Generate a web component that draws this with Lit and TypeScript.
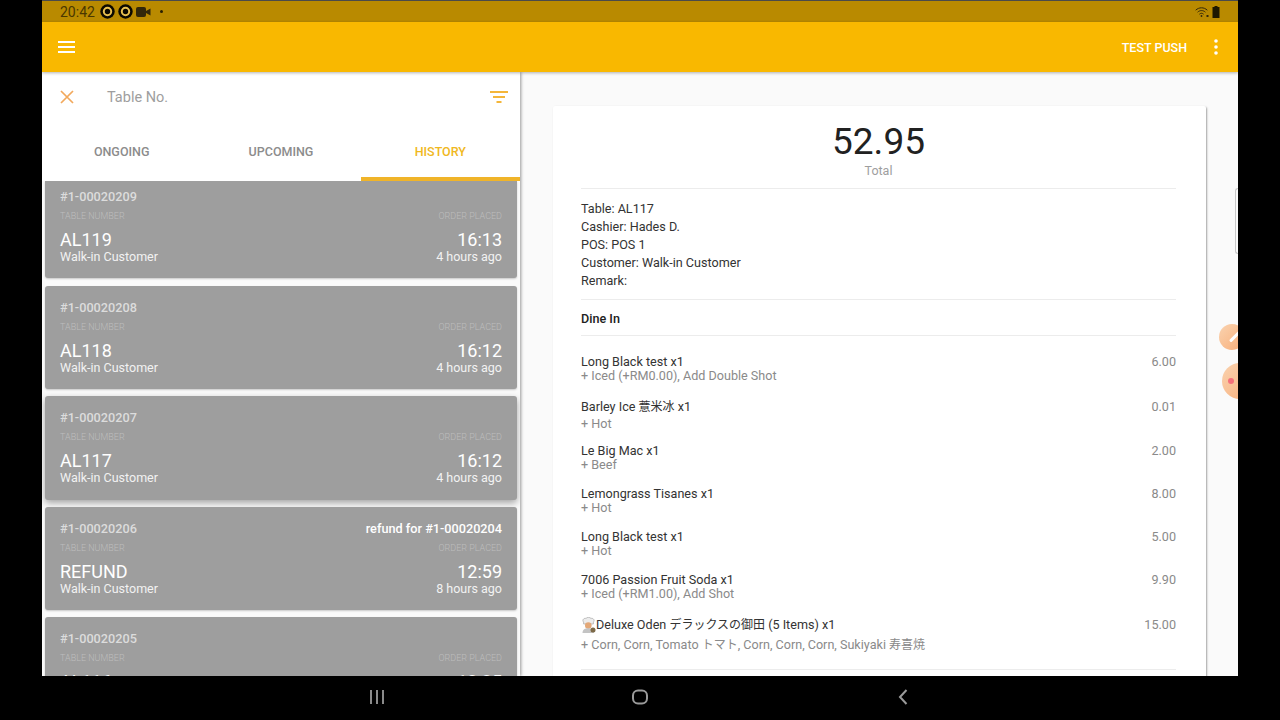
import { LitElement, html, css, svg } from 'lit';
import { customElement } from 'lit/decorators.js';

const orders = [
  { no: '#1-00020209', table: 'AL119', time: '16:13', ago: '4 hours ago', first: true },
  { no: '#1-00020208', table: 'AL118', time: '16:12', ago: '4 hours ago' },
  { no: '#1-00020207', table: 'AL117', time: '16:12', ago: '4 hours ago', selected: true },
  { no: '#1-00020206', table: 'REFUND', time: '12:59', ago: '8 hours ago', refund: 'refund for #1-00020204' },
  { no: '#1-00020205', table: 'AL116', time: '12:35', ago: '8 hours ago' },
];

const items = [
  { name: 'Long Black test x1', sub: '+ Iced (+RM0.00), Add Double Shot', price: '6.00' },
  { name: 'Barley Ice 薏米冰 x1', sub: '+ Hot', price: '0.01' },
  { name: 'Le Big Mac x1', sub: '+ Beef', price: '2.00' },
  { name: 'Lemongrass Tisanes x1', sub: '+ Hot', price: '8.00' },
  { name: 'Long Black test x1', sub: '+ Hot', price: '5.00' },
  { name: '7006 Passion Fruit Soda x1', sub: '+ Iced (+RM1.00), Add Shot', price: '9.90' },
  { name: 'Deluxe Oden デラックスの御田 (5 Items) x1', sub: '+ Corn, Corn, Tomato トマト, Corn, Corn, Corn, Sukiyaki 寿喜焼', price: '15.00', chef: true },
];

const ringIcon = svg`<circle cx="7.5" cy="7.5" r="7.2" fill="#0c0900"/><circle cx="7.5" cy="7.5" r="3.7" fill="none" stroke="#e8c050" stroke-width="2"/>`;

const cjkRun = /([\u3040-\u30ff\u4e00-\u9fff]+)/;

// the CJK runs sit a bit smaller than the latin text around them
const cjk = (text: string) =>
  text.split(cjkRun).map((part, i) => (i % 2 ? html`<span class="cjk">${part}</span>` : part));

@customElement('app-root')
export class AppRoot extends LitElement {
  static styles = css`
    :host {
      display: block;
      width: 1280px;
      height: 720px;
      background: #000;
      overflow: hidden;
      font-family: Roboto, "Noto Sans CJK JP", sans-serif;
    }
    .device {
      position: relative;
      width: 1196px;
      height: 676px;
      margin-left: 42px;
      display: flex;
      flex-direction: column;
      background: #fafafa;
      overflow: hidden;
    }
    .status {
      height: 22px;
      flex: none;
      box-sizing: border-box;
      border-top: 1px solid #4a4a4a;
      background: #b98a00;
      display: flex;
      align-items: center;
      padding: 0 18px 0 18px;
      color: #4a3700;
      font-size: 14px;
    }
    .status .clock { margin-right: 5px; }
    .status .ic { margin-right: 3px; display: block; }
    .status .dot {
      width: 3px;
      height: 3px;
      border-radius: 50%;
      background: #2a2000;
      margin-left: 6px;
    }
    .status .grow { flex: 1; }
    .appbar {
      height: 50px;
      flex: none;
      background: #f9b800;
      display: flex;
      align-items: center;
      padding: 0 15px 0 16px;
      color: #fff;
      box-shadow: 0 1px 3px rgba(0, 0, 0, 0.3);
      position: relative;
      z-index: 3;
    }
    .appbar .grow { flex: 1; }
    .appbar .push {
      font-size: 12.5px;
      font-weight: 500;
      margin-right: 22px;
    }
    .main {
      flex: 1;
      display: flex;
      min-height: 0;
    }
    .left {
      width: 478px;
      flex: none;
      background: #fafafa;
      display: flex;
      flex-direction: column;
      box-shadow: 1px 0 3px rgba(0, 0, 0, 0.4);
      position: relative;
      z-index: 2;
    }
    .search {
      height: 50px;
      flex: none;
      background: #fff;
      display: flex;
      align-items: center;
      padding: 0 12px 0 18px;
    }
    .search .ph {
      flex: 1;
      margin-left: 33px;
      padding-top: 1px;
      font-size: 14.5px;
      color: #9e9e9e;
    }
    .tabs {
      height: 59px;
      flex: none;
      background: #fff;
      display: grid;
      grid-template-columns: repeat(3, 1fr);
    }
    .tab {
      display: flex;
      align-items: center;
      justify-content: center;
      box-sizing: border-box;
      border-bottom: 4px solid transparent;
      padding-top: 4px;
      font-size: 12.5px;
      font-weight: 500;
      color: #8c8c8c;
    }
    .tab.on {
      color: #f0b822;
      border-bottom-color: #f0b429;
    }
    .list {
      flex: 1;
      min-height: 0;
      overflow: hidden;
      padding: 0 3px;
      display: flex;
      flex-direction: column;
      gap: 7px;
    }
    .card {
      flex: none;
      box-sizing: border-box;
      height: 103.3px;
      padding: 14px 15px 0;
      background: #9e9e9e;
      border-radius: 3px;
      box-shadow: 0 1px 2px rgba(0, 0, 0, 0.2);
      color: #fff;
    }
    .card.first {
      height: 97px;
      margin-bottom: 1px;
      padding-top: 8px;
      border-radius: 0 0 3px 3px;
    }
    .card.selected { box-shadow: 0 3px 7px rgba(0, 0, 0, 0.35); }
    .row {
      display: flex;
      justify-content: space-between;
      align-items: baseline;
    }
    .no {
      font-size: 12.7px;
      font-weight: 500;
      line-height: 16px;
      color: #dcdcdc;
    }
    .refund {
      font-size: 12.7px;
      font-weight: 500;
      line-height: 16px;
      color: #fff;
    }
    .label {
      font-size: 9px;
      font-weight: 300;
      line-height: 12px;
      margin-top: 5px;
      color: #bdbdbd;
    }
    .big {
      font-size: 18px;
      line-height: 18px;
      margin-top: 9px;
      color: #fff;
    }
    .small {
      font-size: 12.5px;
      line-height: 15px;
      color: #f2f2f2;
    }
    .right {
      flex: 1;
      min-width: 0;
      padding: 34px 32px 0 33px;
      overflow: hidden;
    }
    .sheet {
      background: #fff;
      padding: 0 30px 0 28px;
      height: 640px;
      box-shadow: 1px 1px 2px rgba(0, 0, 0, 0.35);
      border-radius: 2px;
      color: #333;
      font-size: 12.6px;
    }
    .cjk { font-size: 12px; line-height: 1; }
    .total {
      text-align: center;
      padding: 16px 0 10px;
      border-bottom: 1px solid #ececec;
    }
    .total .num {
      font-size: 37px;
      line-height: 40px;
      color: #212121;
    }
    .total .cap {
      font-size: 12.5px;
      line-height: 15px;
      margin-top: 1px;
      color: #9e9e9e;
    }
    .info {
      padding: 11px 0 9px;
      line-height: 18px;
      border-bottom: 1px solid #ececec;
    }
    .dine {
      font-weight: 500;
      padding-top: 2px;
      line-height: 33px;
      color: #212121;
      border-bottom: 1px solid #ececec;
    }
    .items {
      padding: 18px 0 14px;
      border-bottom: 1px solid #ececec;
    }
    .item {
      display: flex;
      justify-content: space-between;
      align-items: baseline;
      margin-bottom: 14px;
    }
    .item.tall { margin-bottom: 12px; }
    .item:last-child { margin-bottom: 0; }
    .item .price { color: #8a8a8a; }
    .item .sub { color: #8a8a8a; line-height: 14px; }
    .item .sub.tall { line-height: 20px; }
    .item .name { display: flex; align-items: baseline; white-space: pre; line-height: 15px; }
    .item .name.tall { line-height: 20px; }
    .item .name svg { align-self: center; }
    .edge {
      position: absolute;
      right: 0;
      top: 188px;
      width: 2px;
      height: 64px;
      border: 1px solid #c8c8c8;
      border-right: none;
      border-radius: 3px 0 0 3px;
    }
    .bubble {
      position: absolute;
      border-radius: 50%;
      background: linear-gradient(135deg, #fad3b0, #f8ad78);
      z-index: 4;
    }
    .bubble.a { left: 1177px; top: 324px; width: 26px; height: 26px; }
    .bubble.b { left: 1180px; top: 363px; width: 36px; height: 36px; }
    .bubble.a::after {
      content: "";
      position: absolute;
      left: 9px;
      top: 11px;
      width: 14px;
      height: 3px;
      background: #fff;
      border-radius: 2px;
      transform: rotate(-45deg);
    }
    .bubble.b::after {
      content: "";
      position: absolute;
      left: 6px;
      top: 15px;
      width: 6px;
      height: 6px;
      border-radius: 50%;
      background: #f4707a;
    }
    .nav {
      height: 44px;
      flex: none;
      box-sizing: border-box;
      padding-bottom: 2px;
      display: flex;
      justify-content: center;
      align-items: center;
      gap: 213px;
    }
    .nav svg { display: block; width: 50px; height: 20px; }
  `;

  private card(o: (typeof orders)[number]) {
    return html`
      <div class="card ${o.first ? 'first' : ''} ${o.selected ? 'selected' : ''}">
        <div class="row">
          <span class="no">${o.no}</span>
          ${o.refund ? html`<span class="refund">${o.refund}</span>` : ''}
        </div>
        <div class="row label"><span>TABLE NUMBER</span><span>ORDER PLACED</span></div>
        <div class="row big"><span>${o.table}</span><span>${o.time}</span></div>
        <div class="row small"><span>Walk-in Customer</span><span>${o.ago}</span></div>
      </div>
    `;
  }

  private chef() {
    return html`<svg width="15" height="16" viewBox="0 0 15 16">
      <path d="M2.6 5C.8 3.2 2.8.8 5 1.4 6.2 0 8.8 0 10 1.4 12.2.8 14.2 3.2 12.4 5V7H2.6Z" fill="#ececec" stroke="#9c9c9c" stroke-width=".6"/>
      <circle cx="7.3" cy="8.6" r="3.3" fill="#e3a878"/>
      <path d="M1.5 16C1.5 12.4 4 11.2 7.3 11.2S13 12.4 13 16Z" fill="#c4c4c4"/>
      <circle cx="12" cy="13" r="2.5" fill="#7d6a48"/>
    </svg>`;
  }

  render() {
    return html`
      <div class="device">
        <div class="status">
          <span class="clock">20:42</span>
          <svg class="ic" width="15" height="15" viewBox="0 0 15 15">${ringIcon}</svg>
          <svg class="ic" width="15" height="15" viewBox="0 0 15 15">${ringIcon}</svg>
          <svg class="ic" width="15" height="12" viewBox="0 0 15 12">
            <rect x="0" y="1" width="10" height="10" rx="2" fill="#33280a"/>
            <path d="M10 5 14.5 2.5V9.5L10 7Z" fill="#33280a"/>
          </svg>
          <span class="dot"></span>
          <span class="grow"></span>
          <svg width="14" height="12" viewBox="0 0 14 12" fill="none" stroke="#33280a" stroke-width="1">
            <path d="M.7 4.2C4 1 9 1 12.3 4.2M2.6 6.2C5 4 8 4 10.4 6.2M4.4 8.2C5.8 7 7.2 7 8.6 8.2"/>
            <circle cx="6.5" cy="10" r=".9" fill="#33280a" stroke="none"/>
            <rect x="11.5" y="9" width="2" height="2" fill="#33280a" stroke="none"/>
          </svg>
          <svg style="margin-left:3px" width="8" height="12" viewBox="0 0 8 12">
            <path d="M2.5 0H5.5V1H7.5V12H.5V1H2.5Z" fill="#1e1800"/>
          </svg>
        </div>

        <div class="appbar">
          <svg width="18" height="12" viewBox="0 0 18 12" fill="#fff">
            <rect y="0" width="17" height="2"/><rect y="5" width="17" height="2"/><rect y="10" width="17" height="2"/>
          </svg>
          <span class="grow"></span>
          <span class="push">TEST PUSH</span>
          <svg width="14" height="16" viewBox="0 0 14 16" fill="#fff">
            <circle cx="7" cy="2" r="1.8"/><circle cx="7" cy="8" r="1.8"/><circle cx="7" cy="14" r="1.8"/>
          </svg>
        </div>

        <div class="main">
          <div class="left">
            <div class="search">
              <svg width="14" height="14" viewBox="0 0 14 14" stroke="#f2a95c" stroke-width="1.7" fill="none">
                <path d="M1 1 13 13M13 1 1 13"/>
              </svg>
              <span class="ph">Table No.</span>
              <svg width="18" height="13" viewBox="0 0 18 13" fill="#f4b63a">
                <rect x="0" y="0" width="18" height="2"/><rect x="3" y="5" width="12" height="2"/><rect x="6.5" y="10" width="5" height="2"/>
              </svg>
            </div>
            <div class="tabs">
              <div class="tab">ONGOING</div>
              <div class="tab">UPCOMING</div>
              <div class="tab on">HISTORY</div>
            </div>
            <div class="list">${orders.map((o) => this.card(o))}</div>
          </div>

          <div class="right">
            <div class="sheet">
              <div class="total">
                <div class="num">52.95</div>
                <div class="cap">Total</div>
              </div>
              <div class="info">
                <div>Table: AL117</div>
                <div>Cashier: Hades D.</div>
                <div>POS: POS 1</div>
                <div>Customer: Walk-in Customer</div>
                <div>Remark:</div>
              </div>
              <div class="dine">Dine In</div>
              <div class="items">
                ${items.map(
                  (it) => html`
                    <div class="item ${cjkRun.test(it.name) ? 'tall' : ''}">
                      <div>
                        <div class="name ${cjkRun.test(it.name) ? 'tall' : ''}">
                          ${it.chef ? this.chef() : ''}<span>${cjk(it.name)}</span>
                        </div>
                        <div class="sub ${cjkRun.test(it.sub) ? 'tall' : ''}">${cjk(it.sub)}</div>
                      </div>
                      <div class="price">${it.price}</div>
                    </div>
                  `
                )}
              </div>
            </div>
          </div>
        </div>

        <div class="edge"></div>
        <div class="bubble a"></div>
        <div class="bubble b"></div>
      </div>

      <div class="nav">
        <svg viewBox="0 0 50 20" fill="none" stroke="#8a8a8a" stroke-width="2">
          <path d="M19 3V17M25 3V17M31 3V17"/>
        </svg>
        <svg viewBox="0 0 50 20" fill="none" stroke="#9a9a9a" stroke-width="2">
          <rect x="18" y="3.5" width="14" height="13" rx="5"/>
        </svg>
        <svg viewBox="0 0 50 20" fill="none" stroke="#9a9a9a" stroke-width="2">
          <path d="M28.5 3 22 10 28.5 17"/>
        </svg>
      </div>
    `;
  }
}
